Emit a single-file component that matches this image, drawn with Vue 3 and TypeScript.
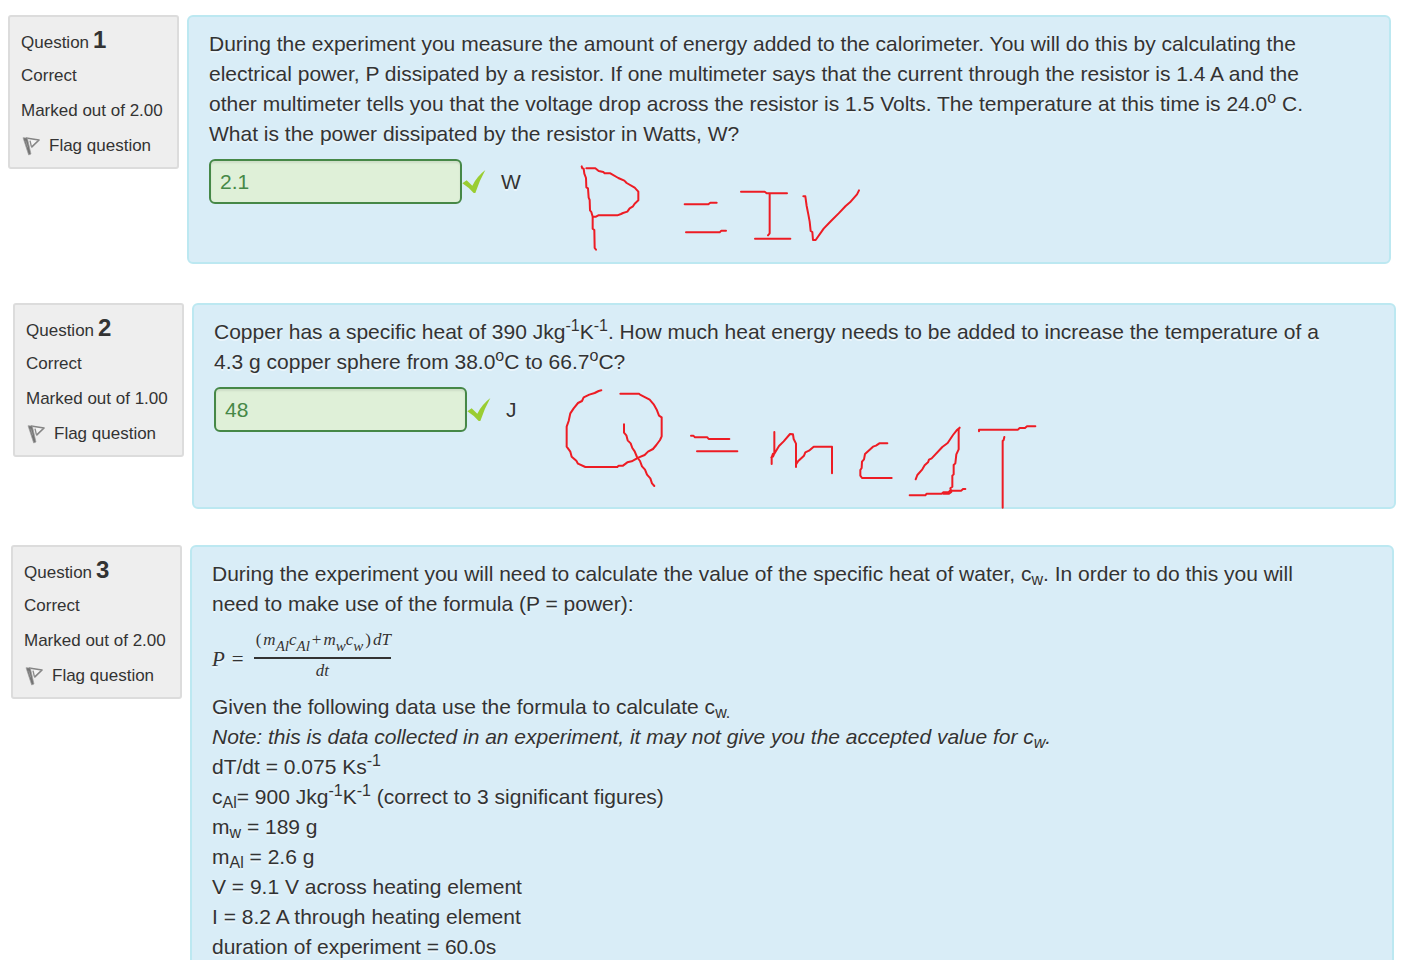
<script setup lang="ts">
interface Question {
  id: number
  mark: string
}

const questions: Question[] = [
  { id: 1, mark: '2.00' },
  { id: 2, mark: '1.00' },
  { id: 3, mark: '2.00' },
]
</script>

<template>
  <main class="page">
    <section v-for="q in questions" :key="q.id" class="question" :class="'q' + q.id">
      <aside class="info">
        <h3 class="line title">Question <b>{{ q.id }}</b></h3>
        <div class="line">Correct</div>
        <div class="line">Marked out of {{ q.mark }}</div>
        <button class="line flag" type="button">
          <svg class="flag-icon" viewBox="0 0 72 72" aria-hidden="true">
            <path d="M15 12 L54 18 L31 40" fill="#f4f4f4" stroke="#858585" stroke-width="5" stroke-linejoin="round" />
            <path d="M27 20 L31 37" stroke="#8a8a8a" stroke-width="4" />
            <path d="M6 11 L19 12 L30 60 L23 63 Z" fill="#747474" stroke="#a0a0a0" stroke-width="2" />
            <path d="M14 20 L20 40" stroke="#a5a5a5" stroke-width="2" />
          </svg>
          <span>Flag question</span>
        </button>
      </aside>

      <div class="content">
        <template v-if="q.id === 1">
          <p>
            During the experiment you measure the amount of energy added to the calorimeter. You will do this by
            calculating the electrical power, P dissipated by a resistor. If one multimeter says that the current
            through the resistor is 1.4 A and the other multimeter tells you that the voltage drop across the resistor
            is 1.5 Volts. The temperature at this time is 24.0<sup>o</sup> C. What is the power dissipated by the
            resistor in Watts, W?
          </p>
          <div class="answer">
            <input id="a1" type="text" value="2.1" readonly />
            <svg class="tick" viewBox="0 0 72 72" role="img" aria-label="Correct">
              <path d="M1 40 L14 31 L31 47 Q44 20 70 0 Q52 32 40 69 L35 69 Q20 52 1 40 Z" fill="#9acd32" />
            </svg>
            <label for="a1">W</label>
          </div>
          <svg class="ink ink1" viewBox="0 0 1380 336" aria-hidden="true">
            <path d="M425 49 L427 55 L431 56 L433 71 L438 84 L439 112 L444 115 L446 143 L449 150 L450 181 L454 186 L458 200 L458 236 L463 240 L464 294 L468 299" />
            <path d="M439 55 H466 L476 63 L490 66 L494 70 H511 L535 84 L553 92 L560 99 L584 113 L595 125 V151 L584 161 L579 169 L569 175 L562 185 L549 189 L543 192 L532 196 H475 L468 200 H459" />
            <path d="M734 163 H805 L811 158 H830 M738 247 H839 L844 242 H858" />
            <path d="M903 125 H974 L980 130 H1041 M989 130 V250 L984 256 M945 266 H1051" />
            <path d="M1090 139 H1096 L1100 168 L1105 193 L1109 215 L1112 243 L1117 246 L1119 270 H1127 L1151 236 L1173 213 L1196 190 L1217 168 L1230 157 L1251 133 L1257 121" />
          </svg>
        </template>

        <template v-else-if="q.id === 2">
          <p>
            Copper has a specific heat of 390 Jkg<sup>-1</sup>K<sup>-1</sup>. How much heat energy needs to be added to
            increase the temperature of a 4.3 g copper sphere from 38.0<sup>o</sup>C to 66.7<sup>o</sup>C?
          </p>
          <div class="answer">
            <input id="a2" type="text" value="48" readonly />
            <svg class="tick" viewBox="0 0 72 72" role="img" aria-label="Correct">
              <path d="M1 40 L14 31 L31 47 Q44 20 70 0 Q52 32 40 69 L35 69 Q20 52 1 40 Z" fill="#9acd32" />
            </svg>
            <label for="a2">J</label>
          </div>
          <svg class="ink ink2" viewBox="0 0 1860 420" aria-hidden="true">
            <path d="M484 61 L476 63 L464 69 L448 74 L431 82 L426 93 L414 99 L401 115 L391 130 L386 153 L380 170 V230 L391 245 L395 260 L409 272 L414 281 L436 291 H532 L536 287 H549 L562 277 L575 274 L595 263 L614 255 L624 245 L639 237 L649 225 L660 210 L665 199 V142 L657 137 L651 121 L641 103 L629 89 L600 74 L597 71 H541" />
            <path d="M552 163 V188 L559 196 L563 211 L572 220 L577 234 L584 244 L591 261 L600 273 L606 289 L615 299 L621 314 L631 325 L636 340 L643 348" />
            <path d="M753 197 H760 L765 202 H802 L806 207 H868 M771 244 H892" />
            <path d="M1003 186 V251 M999 251 L995 262 V282 M994 262 L999 260 L1003 251 L1017 228 L1031 214 L1050 192 L1059 193 L1061 207 L1068 221 V291 M1068 283 L1074 274 L1092 257 L1096 247 L1107 242 L1121 230 H1176 V310" />
            <path d="M1342 220 H1318 L1308 227 L1299 230 L1275 252 L1272 268 L1266 275 L1265 294 L1261 300 V317 L1266 324 H1355" />
            <path d="M1427 328 L1432 315 L1447 298 L1454 286 L1464 277 L1467 269 L1475 265 L1507 231 L1523 219 L1539 195 L1550 181 L1559 173 L1556 178 V238 L1549 253 L1546 280 L1541 285 V313 L1537 317 V350 L1531 355 L1534 366 L1527 371 H1510" />
            <path d="M1409 376 H1456 L1460 371 H1505 L1510 367 H1525 L1530 362 H1564 L1569 357 H1576" />
            <path d="M1617 184 V179 H1734 L1739 174 H1755 L1761 169 H1786 M1693 201 L1691 210 L1688 213 V413" />
          </svg>
        </template>

        <template v-else>
          <p>
            During the experiment you will need to calculate the value of the specific heat of water, c<sub>w</sub>. In
            order to do this you will need to make use of the formula (P = power):
          </p>
          <div class="formula">
            <span class="lhs"><i>P</i><span>=</span></span>
            <span class="fraction">
              <span class="num"><span>(</span><i>m<sub>Al</sub>c<sub>Al</sub></i><span>+</span><i>m<sub>w</sub>c<sub>w</sub></i><span>)</span><i>dT</i></span>
              <span class="den"><i>dt</i></span>
            </span>
          </div>
          <p>Given the following data use the formula to calculate c<sub>w.</sub></p>
          <p><em>Note: this is data collected in an experiment, it may not give you the accepted value for c<sub>w</sub>.</em></p>
          <p>dT/dt = 0.075 Ks<sup>-1</sup></p>
          <p>c<sub>Al</sub>= 900 Jkg<sup>-1</sup>K<sup>-1</sup> (correct to 3 significant figures)</p>
          <p>m<sub>w</sub> = 189 g</p>
          <p>m<sub>Al</sub> = 2.6 g</p>
          <p>V = 9.1 V across heating element</p>
          <p>I = 8.2 A through heating element</p>
          <p>duration of experiment = 60.0s</p>
        </template>
      </div>
    </section>
  </main>
</template>

<style>
body {
  margin: 0;
  background: #fff;
}
</style>

<style scoped>
.page {
  box-sizing: border-box;
  height: 100vh;
  overflow-y: auto;
  scrollbar-width: none;
  padding-top: 15px;
  color: #333;
  font-family: "Liberation Sans", Arial, sans-serif;
  font-size: 21px;
  line-height: 30px;
}
.question {
  display: flex;
  align-items: flex-start;
  gap: 8px;
}
.q1 { margin: 0 25px 39px 8px; }
.q2 { margin: 0 20px 36px 13px; }
.q3 { margin: 0 22px 0 11px; }
.info {
  box-sizing: border-box;
  flex: 0 0 171px;
  padding: 6px 8px 4px 11px;
  border: 2px solid #dcdcdc;
  border-radius: 3px;
  background: #eee;
}
.line {
  display: flex;
  align-items: center;
  height: 35px;
  margin: 0;
  font-weight: normal;
  font-size: 17px;
  line-height: 35px;
  white-space: nowrap;
}
.title {
  align-items: baseline;
  gap: 4px;
  line-height: 33px;
}
.title b {
  font-size: 24px;
}
.flag {
  gap: 4px;
  padding: 0;
  border: 0;
  background: none;
  color: inherit;
  font-family: inherit;
  cursor: pointer;
}
.flag-icon {
  width: 24px;
  height: 24px;
  fill: none;
}
.content {
  position: relative;
  flex: 1;
  min-width: 0;
  padding: 12px 60px 20px 20px;
  border: 2px solid #bce8f1;
  border-radius: 6px;
  background: #d9edf7;
  text-shadow: 0 2px 0 rgba(255, 255, 255, 0.5);
}
.q1 .content { padding-bottom: 58px; }
.q2 .content { padding-bottom: 75px; }
p {
  margin: 0;
}
sub,
sup {
  position: relative;
  font-size: 16px;
  line-height: 0;
  vertical-align: baseline;
}
sup { top: -8px; }
sub { bottom: -4px; }
.answer {
  display: flex;
  align-items: center;
  margin-top: 10px;
}
.answer input {
  box-sizing: border-box;
  width: 253px;
  height: 45px;
  padding: 0 9px;
  border: 2px solid #468847;
  border-radius: 6px;
  background: #dff0d8;
  box-shadow: inset 0 2px 2px rgba(0, 0, 0, 0.08);
  color: #468847;
  font: inherit;
  outline: none;
}
.tick {
  width: 24px;
  height: 24px;
  margin-right: 15px;
}
.ink {
  position: absolute;
  fill: none;
  stroke: #ed1c24;
  stroke-width: 6;
  stroke-linecap: round;
  stroke-linejoin: round;
  pointer-events: none;
}
.ink1 {
  top: 133px;
  left: 251px;
  width: 460px;
  height: 112px;
}
.ink2 {
  top: 65px;
  left: 246px;
  width: 620px;
  height: 140px;
}
.formula {
  display: flex;
  align-items: center;
  gap: 10px;
  height: 73px;
  font-family: "Liberation Serif", "Times New Roman", serif;
}
.lhs {
  display: flex;
  gap: 7px;
  padding-top: 6px;
}
.fraction {
  display: flex;
  flex-direction: column;
  font-size: 17px;
  line-height: 24px;
}
.num {
  display: flex;
  gap: 2px;
  padding: 0 0 5px 2px;
  border-bottom: 2px solid #333;
}
.num sub {
  bottom: -6px;
  font-size: 15px;
}
.den {
  text-align: center;
}
</style>
